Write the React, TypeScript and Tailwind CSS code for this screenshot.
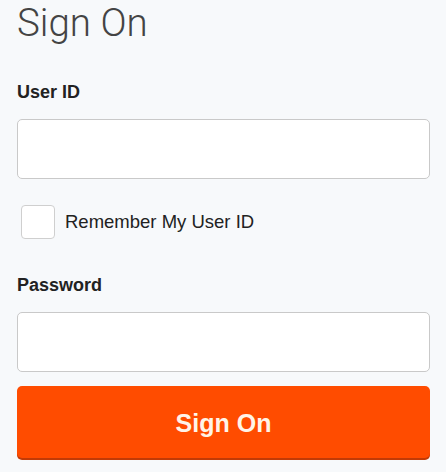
import { useState } from 'react'

export default function App() {
  const [remember, setRemember] = useState(false)

  return (
    <div className="min-h-[472px] bg-[#f7f9fb] pl-[17px] pr-[16px] font-['Liberation_Sans',Arial,sans-serif]">
      <h1 className="pt-[1px] text-[38.5px] leading-[44px] font-light text-[#444] font-['Roboto','Liberation_Sans',sans-serif]">
        Sign On
      </h1>

      <form className="flex flex-col" onSubmit={(e) => e.preventDefault()}>
        <label htmlFor="userId" className="mt-[37px] text-[18px] leading-[20px] font-bold text-[#222]">
          User ID
        </label>
        <input
          id="userId"
          type="text"
          className="mt-[17px] h-[60px] w-full rounded-[5px] border border-[#c9c9c9] bg-white px-3 text-[18px] outline-none"
        />

        <label className="mt-[26px] flex items-center gap-[10px] pl-[4px]">
          <input
            type="checkbox"
            checked={remember}
            onChange={(e) => setRemember(e.target.checked)}
            className="sr-only"
          />
          <span className="h-[34px] w-[34px] rounded-[4px] border border-[#cfcfcf] bg-white" />
          <span className="text-[18.5px] text-[#222]">Remember My User ID</span>
        </label>

        <label htmlFor="password" className="mt-[36px] text-[18px] leading-[20px] font-bold text-[#222]">
          Password
        </label>
        <input
          id="password"
          type="password"
          className="mt-[17px] h-[60px] w-full rounded-[5px] border border-[#c9c9c9] bg-white px-3 text-[18px] outline-none"
        />

        <button
          type="submit"
          className="mt-[14px] h-[72px] w-full rounded-[5px] bg-[#ff4c00] pt-[3px] text-[25px] font-bold text-[#fff4e8] shadow-[0_2px_0_#c23a06]"
        >
          Sign On
        </button>
      </form>
    </div>
  )
}
